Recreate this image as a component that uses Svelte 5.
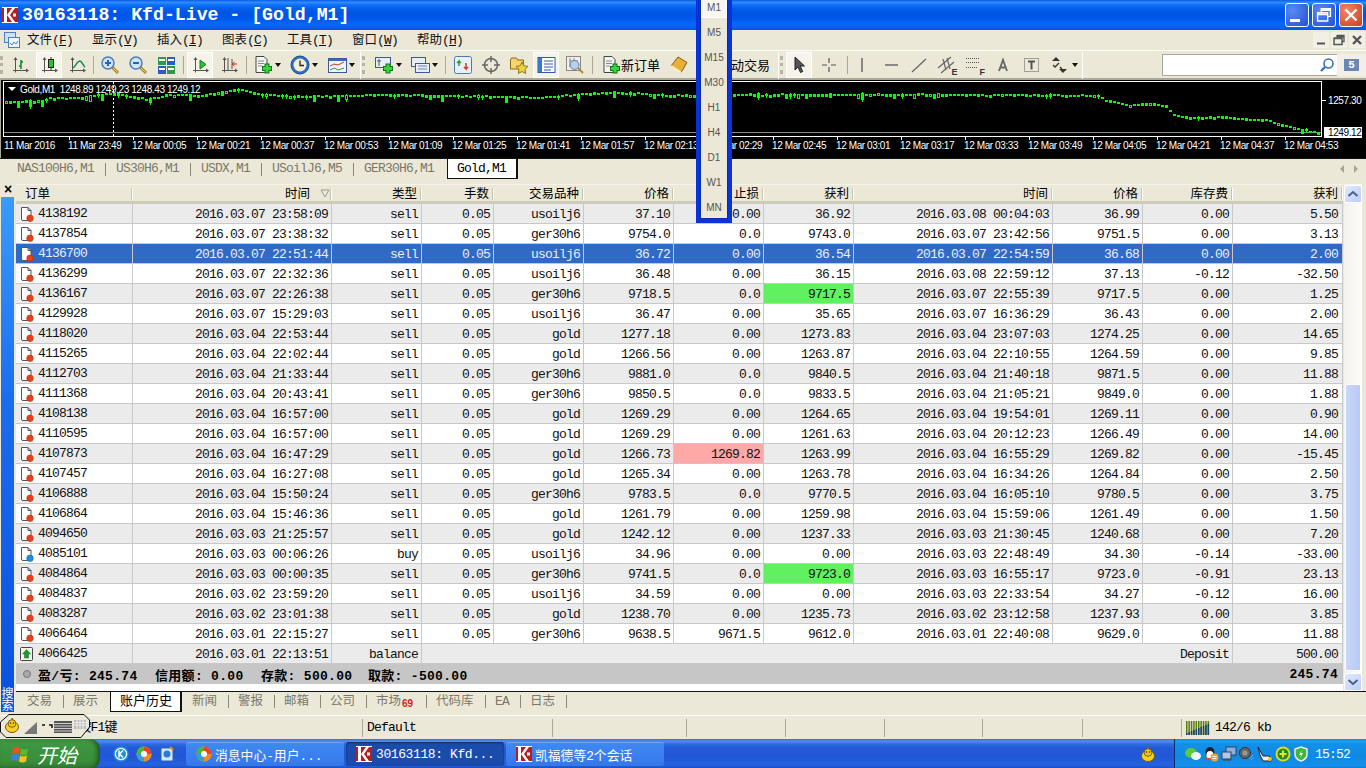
<script>
  const columns = [
    { label: "订单", left: true },
    { label: "时间", sort: true },
    { label: "类型" },
    { label: "手数" },
    { label: "交易品种" },
    { label: "价格" },
    { label: "止损" },
    { label: "获利" },
    { label: "时间" },
    { label: "价格" },
    { label: "库存费" },
    { label: "获利" }
  ];

  const raw = `4138192|2016.03.07 23:58:09|sell|0.05|usoilj6|37.10|0.00|36.92|2016.03.08 00:04:03|36.99|0.00|5.50
4137854|2016.03.07 23:38:32|sell|0.05|ger30h6|9754.0|0.0|9743.0|2016.03.07 23:42:56|9751.5|0.00|3.13
4136700|2016.03.07 22:51:44|sell|0.05|usoilj6|36.72|0.00|36.54|2016.03.07 22:54:59|36.68|0.00|2.00
4136299|2016.03.07 22:32:36|sell|0.05|usoilj6|36.48|0.00|36.15|2016.03.08 22:59:12|37.13|-0.12|-32.50
4136167|2016.03.07 22:26:38|sell|0.05|ger30h6|9718.5|0.0|9717.5|2016.03.07 22:55:39|9717.5|0.00|1.25
4129928|2016.03.07 15:29:03|sell|0.05|usoilj6|36.47|0.00|35.65|2016.03.07 16:36:29|36.43|0.00|2.00
4118020|2016.03.04 22:53:44|sell|0.05|gold|1277.18|0.00|1273.83|2016.03.04 23:07:03|1274.25|0.00|14.65
4115265|2016.03.04 22:02:44|sell|0.05|gold|1266.56|0.00|1263.87|2016.03.04 22:10:55|1264.59|0.00|9.85
4112703|2016.03.04 21:33:44|sell|0.05|ger30h6|9881.0|0.0|9840.5|2016.03.04 21:40:18|9871.5|0.00|11.88
4111368|2016.03.04 20:43:41|sell|0.05|ger30h6|9850.5|0.0|9833.5|2016.03.04 21:05:21|9849.0|0.00|1.88
4108138|2016.03.04 16:57:00|sell|0.05|gold|1269.29|0.00|1264.65|2016.03.04 19:54:01|1269.11|0.00|0.90
4110595|2016.03.04 16:57:00|sell|0.05|gold|1269.29|0.00|1261.63|2016.03.04 20:12:23|1266.49|0.00|14.00
4107873|2016.03.04 16:47:29|sell|0.05|gold|1266.73|1269.82|1263.99|2016.03.04 16:55:29|1269.82|0.00|-15.45
4107457|2016.03.04 16:27:08|sell|0.05|gold|1265.34|0.00|1263.78|2016.03.04 16:34:26|1264.84|0.00|2.50
4106888|2016.03.04 15:50:24|sell|0.05|ger30h6|9783.5|0.0|9770.5|2016.03.04 16:05:10|9780.5|0.00|3.75
4106864|2016.03.04 15:46:36|sell|0.05|gold|1261.79|0.00|1259.98|2016.03.04 15:59:06|1261.49|0.00|1.50
4094650|2016.03.03 21:25:57|sell|0.05|gold|1242.12|0.00|1237.33|2016.03.03 21:30:45|1240.68|0.00|7.20
4085101|2016.03.03 00:06:26|buy|0.05|usoilj6|34.96|0.00|0.00|2016.03.03 22:48:49|34.30|-0.14|-33.00
4084864|2016.03.03 00:00:35|sell|0.05|ger30h6|9741.5|0.0|9723.0|2016.03.03 16:55:17|9723.0|-0.91|23.13
4084837|2016.03.02 23:59:20|sell|0.05|usoilj6|34.59|0.00|0.00|2016.03.03 22:33:54|34.27|-0.12|16.00
4083287|2016.03.02 23:01:38|sell|0.05|gold|1238.70|0.00|1235.73|2016.03.02 23:12:58|1237.93|0.00|3.85
4066464|2016.03.01 22:15:27|sell|0.05|ger30h6|9638.5|9671.5|9612.0|2016.03.01 22:40:08|9629.0|0.00|11.88`;
  const rows = raw.split("\n").map((l) => l.split("|"));

  // which cells hit their stop / take profit
  const hits = { "4136167-7": "tp", "4084864-7": "tp", "4107873-6": "sl" };

  // chart: rough price path as [x, y] anchors, noise on top
  const anchors = [[5,101],[40,100],[50,97],[75,98],[90,95],[110,92],[147,99],[165,94],[200,95],[240,88],[255,93],[300,96],[400,94],[460,95],[540,97],[600,92],[620,92],[680,95],[740,94],[1000,94],[1097,95],[1105,100],[1130,105],[1150,103],[1165,105],[1172,114],[1190,117],[1220,116],[1240,118],[1260,119],[1270,120],[1280,124],[1300,129],[1318,132]];
  function pathY(x) {
    for (let i = 1; i < anchors.length; i++) {
      if (x <= anchors[i][0]) {
        const [x0, y0] = anchors[i - 1];
        const [x1, y1] = anchors[i];
        return y0 + ((x - x0) / (x1 - x0)) * (y1 - y0);
      }
    }
    return 132;
  }
  let seed = 17;
  function rnd() {
    seed = (seed * 1103515245 + 12345) & 0x7fffffff;
    return seed / 0x7fffffff;
  }
  const bars = [];
  for (let x = 5; x <= 1318; x += 4) {
    const r = rnd();
    const y = Math.round(pathY(x) + (rnd() - 0.5) * 1.2);
    const h = r < 0.6 ? 2 : r < 0.9 ? 3 : r < 0.97 ? 5 : 7;
    bars.push({ x, y, h, wick: rnd() < 0.12 ? 3 : 0, hollow: h > 2 && rnd() < 0.2 });
  }
  const timeLabels = ["11 Mar 2016","11 Mar 23:49","12 Mar 00:05","12 Mar 00:21","12 Mar 00:37","12 Mar 00:53","12 Mar 01:09","12 Mar 01:25","12 Mar 01:41","12 Mar 01:57","12 Mar 02:13","12 Mar 02:29","12 Mar 02:45","12 Mar 03:01","12 Mar 03:17","12 Mar 03:33","12 Mar 03:49","12 Mar 04:05","12 Mar 04:21","12 Mar 04:37","12 Mar 04:53"];

  const menus = [["文件","F"],["显示","V"],["插入","I"],["图表","C"],["工具","T"],["窗口","W"],["帮助","H"]];
  const periods = ["M1","M5","M15","M30","H1","H4","D1","W1","MN"];
  const chartTabs = ["NAS100H6,M1","US30H6,M1","USDX,M1","USoilJ6,M5","GER30H6,M1"];
  const bottomTabs = ["交易","展示"];
  const bottomTabs2 = ["新闻","警报","邮箱","公司","市场","代码库","EA","日志"];
  const statusCells = [363, 190, 134, 99, 99, 98, 100, 99];

  const axis = '<path d="M5.5 3v14.5M3 15.5h15" fill="none" stroke="#555"/><path d="M3.5 5l2-3 2 3zM16 13.5l3 2-3 2z" fill="#555"/>';
  const lens = (sign) => `<path d="M12 12l6 6" stroke="#a8842a" stroke-width="3"/><path d="M12.500 12.500l5 5" stroke="#f4cf5c" stroke-width="1"/><circle cx="8" cy="8" r="6" fill="#cfe4fa" stroke="#4a7fb5" stroke-width="1.500"/><path d="${sign}" stroke="#2a62b8" stroke-width="2"/>`;
  const plus = '<path d="M14 8.500v10M9 13.500h10" stroke="#0a7a1a" stroke-width="5"/><path d="M14 9.500v8M10 13.500h8" stroke="#3cd03c" stroke-width="3"/>';

  const icons = {
    bars: axis + '<path d="M11 5v9M9 11h2M11 7h2" fill="none" stroke="#0a8a1a" stroke-width="1.500"/>',
    candle: axis + '<path d="M12 2v13" stroke="#333"/><rect x="9.500" y="4.500" width="5" height="8" fill="#2fc22f" stroke="#222"/>',
    line: axis + '<path d="M6 13c3-2 4-7 7-7 2 0 3 5 5 6" fill="none" stroke="#1a8a5a" stroke-width="1.500"/>',
    zoomin: lens("M5 8h6M8 5v6"),
    zoomout: lens("M5 8h6"),
    grid: '<rect x="2" y="2" width="8" height="8" fill="#2c9a4a"/><rect x="11" y="2" width="8" height="8" fill="#2a5fb8"/><rect x="2" y="11" width="8" height="8" fill="#2a5fb8"/><rect x="11" y="11" width="8" height="8" fill="#2c9a4a"/><path d="M3 5h6M12 5h6M3 14h6M12 14h6" stroke="#fff" stroke-width="2"/>',
    shift: axis + '<path d="M10 5v9l6-4.500z" fill="#2fc22f" stroke="#128012"/>',
    end: axis + '<path d="M9 3v12M13 4v10" stroke="#555"/><path d="M13 9h5M15.500 7l-2.500 2 2.500 2" stroke="#d02a10" fill="none"/>',
    newdoc: '<path d="M3 1.500h8l3 3v13h-11z" fill="#f4f4f0" stroke="#444"/><path d="M5 6h6M5 8.500h6M5 11h4" stroke="#888"/>' + plus,
    clock: '<circle cx="10" cy="10" r="9" fill="#2c6fc4" stroke="#1a4a8a"/><circle cx="10" cy="10" r="6.500" fill="#f6efd6"/><path d="M10 5.500v5h4" stroke="#222" fill="none" stroke-width="1.300"/>',
    indic: '<rect x="1.500" y="3.500" width="18" height="14" fill="#f4f4f8" stroke="#3a5a9a"/><rect x="2" y="4" width="17" height="2" fill="#3a6ac0"/><path d="M3 11l4-2 4 1 6-3" stroke="#c03030" fill="none"/><path d="M3 15l4-2 4 2 6-2" stroke="#2a9a3a" fill="none"/>',
    add: '<rect x="1.500" y="2.500" width="15" height="10" fill="#e8eef8" stroke="#3a5a9a"/><path d="M5 4v7M3 6h4" stroke="#555"/>' + plus,
    tile: '<rect x="1.500" y="2.500" width="14" height="9" fill="#e8eef8" stroke="#3a5a9a"/><rect x="5.500" y="8.500" width="14" height="9" fill="#e8eef8" stroke="#3a5a9a"/><path d="M8 11h9M8 14h9" stroke="#6a84b0"/>',
    market: '<rect x="1.500" y="1.500" width="17" height="17" rx="2" fill="#e8f0fa" stroke="#4a7ab5"/><path d="M6 11V6l-2 2M6 6l2 2" stroke="#2aa02a" fill="none" stroke-width="1.500"/><path d="M13 8v6l-2-2M13 14l2-2" stroke="#d83a1a" fill="none" stroke-width="1.500"/>',
    cross: '<circle cx="10" cy="10" r="6.500" fill="none" stroke="#666" stroke-width="1.500"/><path d="M10 1v6M10 13v6M1 10h6M13 10h6" stroke="#666" stroke-width="1.500"/>',
    fav: '<path d="M1.500 5l1-2h5l1 2h6v9h-13z" fill="#f6d66a" stroke="#8a6a1a"/><path d="M13 7l1.800 3.800 4.200.6-3 2.900.7 4.200-3.700-2-3.700 2 .7-4.200-3-2.900 4.200-.6z" fill="#f2d23a" stroke="#8a7a1a"/>',
    nav: '<rect x="2" y="2.500" width="17" height="15" fill="#fff" stroke="#2a5fa8"/><rect x="2" y="3" width="4" height="14" fill="#3a78c8"/><path d="M8 6h9M8 9h9M8 12h9M8 15h7" stroke="#3a5a9a"/>',
    tester: '<rect x="1.500" y="1.500" width="14" height="14" fill="#f0f0f0" stroke="#888"/><path d="M5 3v9M9 3v9M4 6h9" stroke="#888"/><circle cx="9.500" cy="10" r="4.500" fill="#b8d0ee" stroke="#6a7f9a"/><path d="M13 13l5 5" stroke="#b08a2a" stroke-width="2"/>',
    book: '<path d="M2 11l7-9 9 5.500-6 10z" fill="#e8b03a" stroke="#8a5a10"/><path d="M2 11l10 6.500" stroke="#fff2c0" stroke-width="2"/>',
    cursor: '<path d="M6 2v13l3-3 2.500 5.500 2.200-1-2.500-5.500h4.300z" fill="#555" stroke="#222"/>',
    hair: '<path d="M10 3v5M10 12v5M3 10h5M12 10h5" stroke="#555" stroke-width="1.200"/>',
    vline: '<path d="M10 3v14" stroke="#555" stroke-width="1.300"/>',
    hline: '<path d="M4 10h13" stroke="#555" stroke-width="1.300"/>',
    trend: '<path d="M3 17L17 4" stroke="#666" stroke-width="1.300"/>',
    chan: '<path d="M1 13L14 2M4 18L17 7M6 4l3 11M10 3l3 11" stroke="#666" stroke-width="1.200"/>',
    fibo: '<path d="M2 3.500h14M2 7.500h14M2 12.500h12" stroke="#555" stroke-dasharray="1 1"/>',
    letter: '<path d="M6 16L10 5l4 11M7.500 12.500h5" stroke="#666" stroke-width="1.800" fill="none"/>',
    label: '<rect x="2.500" y="3.500" width="14" height="13" fill="none" stroke="#555" stroke-dasharray="1 1"/><path d="M6 6.500h7M9.500 6.500v8" stroke="#555" stroke-width="2"/>',
    arrows: '<path d="M6 2l4 4H2z" fill="#333"/><path d="M13 18l4-4H9z" fill="#333"/><path d="M3 10l2 2 4-4M10 12l2 2" stroke="#333" fill="none" stroke-width="1.300"/>'
  };

  const tools = [
    { grip: 6 },
    { w: 28, i: "bars" }, { w: 30, i: "candle", on: true }, { w: 26, i: "line" },
    { sep: 6 },
    { w: 28, i: "zoomin" }, { w: 28, i: "zoomout" }, { w: 28, i: "grid" },
    { sep: 6 },
    { w: 28, i: "shift", on: true }, { w: 30, i: "end" },
    { sep: 3 },
    { w: 37, i: "newdoc", dd: true }, { w: 36, i: "clock", dd: true }, { w: 38, i: "indic", dd: true },
    { sep: 4, thick: true }, { grip: 6 },
    { w: 36, i: "add", dd: true }, { w: 37, i: "tile", dd: true },
    { sep: 8 },
    { w: 27, i: "market" }, { w: 29, i: "cross" }, { w: 27, i: "fav" }, { w: 27, i: "nav", on: true }, { w: 31, i: "tester" },
    { sep: 3 },
    { w: 71, i: "newdoc", text: "新订单" }, { w: 30, i: "book" },
    { w: 82, label: "动交易" },
    { sep: 4, thick: true }, { grip: 6 },
    { w: 26, i: "cursor", on: true }, { w: 33, i: "hair" },
    { sep: 3 },
    { w: 28, i: "vline" }, { w: 29, i: "hline" }, { w: 28, i: "trend" }, { w: 27, i: "chan", tag: "E" }, { w: 28, i: "fibo", tag: "F" },
    { w: 30, i: "letter" }, { w: 27, i: "label" }, { w: 35, i: "arrows", dd: true },
    { sep: 4, thick: true }
  ];

  const wheel = '<circle cx="8" cy="8" r="7.500" fill="#f5b800"/><path d="M8 8L8 .5A7.500 7.500 0 0 1 15.500 8z" fill="#e8432a"/><path d="M8 8l7.500 0A7.500 7.500 0 0 1 8 15.500z" fill="#f08a20"/><path d="M8 8v7.500A7.500 7.500 0 0 1 .5 8z" fill="#2f9ee8"/><path d="M8 8H.5A7.500 7.500 0 0 1 8 .5z" fill="#45b838"/><circle cx="8" cy="8" r="3" fill="#fff"/>';
  const duck = '<path d="M8 1l1 3" stroke="#a05a10" stroke-width="1.500"/><ellipse cx="8" cy="10" rx="6.500" ry="5.500" fill="#f6d21e" stroke="#7a5a10"/><circle cx="8" cy="6.500" r="3.800" fill="#f6d21e" stroke="#7a5a10"/><circle cx="6.500" cy="6" r=".8" fill="#222"/><circle cx="9.500" cy="6" r=".8" fill="#222"/><path d="M7 7.500h2l-1 1.200z" fill="#e8801a"/>';
  const kmark = '<rect width="16" height="16" fill="#fff"/><rect y="1" width="16" height="14" fill="#b81c1c"/><rect x="2" y="1" width="3" height="14" fill="#fff"/><path d="M5 8l5-7h3L8 8l5 7h-3z" fill="#fff"/><rect x="11" y="6.500" width="3" height="3" fill="#fff"/>';
</script>

{#snippet orderIcon(kind)}
  <svg class="oicon" viewBox="0 0 16 16" width="16" height="16">
    {#if kind === "balance"}
      <rect x="1.500" y="1.500" width="12" height="13" rx="1" fill="#f4f4ec" stroke="#444" />
      <path d="M7.500 3.500l4 4.500H9.500v4h-4V8H3.500z" fill="#1f9a2f" stroke="#0a6a1a" stroke-width=".5" />
    {:else}
      <path d="M2.500 1.500h6.500l3 3v10h-8a1.500 1.500 0 0 1-1.500-1.500z" fill="#fff" stroke="#555" />
      <path d="M9 1.500v3h3" fill="none" stroke="#555" />
      <circle cx="11" cy="12.300" r="3.300" fill={kind === "buy" ? "#1a8ee0" : "#e8401a"} stroke={kind === "buy" ? "#0a5aa0" : "#a02a0a"} stroke-width=".5" />
    {/if}
  </svg>
{/snippet}

<div class="window">
  <header class="titlebar">
    <svg class="applogo" viewBox="0 0 16 16" width="16" height="16">{@html kmark}</svg>
    <span class="title">30163118: Kfd-Live - [Gold,M1]</span>
    <div class="winbtns">
      <div class="wb"><span class="wmin"></span></div>
      <div class="wb">
        <svg viewBox="0 0 24 24" width="24" height="24"><path d="M9 5.500h10v8h-3M9 5.500v3M9 5h10v2H9z" fill="none" stroke="#fff" stroke-width="1.500" /><path d="M5 9.500h11v9H5zM5 9.500h11v2H5z" fill="none" stroke="#fff" stroke-width="1.500" /></svg>
      </div>
      <div class="wb close">
        <svg viewBox="0 0 24 24" width="24" height="24"><path d="M6 6l12 12M18 6L6 18" stroke="#fff" stroke-width="2.600" /></svg>
      </div>
    </div>
  </header>

  <nav class="menubar">
    <svg class="mdiicon" viewBox="0 0 18 18" width="18" height="18"><rect x="1.500" y="1.500" width="11" height="10" fill="#cfe0f4" stroke="#4a80c0" /><rect x="5.500" y="6.500" width="11" height="10" fill="#eef4fc" stroke="#4a80c0" /><path d="M7 12l2 2 2-3 2 2 2-3" stroke="#4a80c0" fill="none" /></svg>
    {#each menus as [name, key]}
      <span class="menu">{name}<span class="key">(<u>{key}</u>)</span></span>
    {/each}
    <div class="mdibtns">
      <div class="mb"><svg viewBox="0 0 16 16" width="16" height="16"><path d="M4 11.500h8" stroke="#555" stroke-width="2" /></svg></div>
      <div class="mb"><svg viewBox="0 0 16 16" width="16" height="16"><path d="M6 3.500h7v6h-2M6 3v2h7" fill="none" stroke="#555" stroke-width="1.300" /><path d="M3 6.500h8v6H3zM3 6h8" fill="none" stroke="#555" stroke-width="1.500" /></svg></div>
      <div class="mb"><svg viewBox="0 0 16 16" width="16" height="16"><path d="M4 4l8 8M12 4l-8 8" stroke="#555" stroke-width="2.400" /></svg></div>
    </div>
  </nav>

  <div class="toolbar">
    {#each tools as t}
      {#if t.grip}
        <span class="grip" style="width:{t.grip}px"></span>
      {:else if t.sep}
        <span class="sep" class:thick={t.thick} style="width:{t.sep}px"></span>
      {:else if t.label}
        <span class="tool labelonly" style="width:{t.w}px">{t.label}</span>
      {:else}
        <span class="tool" class:wide={t.text} style="width:{t.w}px">
          <span class="box" class:on={t.on}>
            <svg viewBox="0 0 20 20" width="20" height="20">{@html icons[t.i]}</svg>
            {#if t.tag}<b class="tag">{t.tag}</b>{/if}
          </span>
          {#if t.text}<span class="tooltext">{t.text}</span>{/if}
          {#if t.dd}<i class="caret"></i>{/if}
        </span>
      {/if}
    {/each}
    <div class="search">
      <svg viewBox="0 0 16 16" width="16" height="16"><circle cx="9.500" cy="6.500" r="4.500" fill="#fff" stroke="#3a70c0" stroke-width="1.600" /><path d="M6 10l-4 4" stroke="#3a70c0" stroke-width="2.400" /></svg>
    </div>
    <div class="chat">
      <span class="bubble">5</span>
    </div>
  </div>

  <div class="chart">
    <svg viewBox="0 80 1366 78" width="1366" height="78">
      <rect x="3.500" y="81.500" width="1318" height="55" fill="none" stroke="#fff" />
      <path d="M113.500 82v54" stroke="#fff" stroke-dasharray="2 2" />
      <path d="M4 132.500h1317" stroke="#8a8a8a" />
      {#each bars as b}
        {#if b.wick}
          <rect x={b.x + 1} y={b.y - 1} width="1" height={b.h + b.wick} fill="#00ff00" />
        {/if}
        <rect x={b.x} y={b.y} width="3" height={b.h} fill="#00ff00" />
        {#if b.hollow}
          <rect x={b.x + 1} y={b.y + 1} width="1" height={b.h - 2} fill="#000" />
        {/if}
      {/each}
      <path d="M8 87h8l-4 4z" fill="#fff" />
      <text x="20" y="93" class="ct">Gold,M1&#160;&#160;1248.89 1249.23 1248.43 1249.12</text>
      {#each timeLabels as label, i}
        {@const x = i === 0 ? 4 : 4 + 64 * i}
        <text x={x} y="149" class="ct">{label}</text>
        {#if i > 0}<path d="M{x + 1}.5 137v3" stroke="#fff" />{/if}
      {/each}
      <path d="M1322 100.500h4" stroke="#fff" />
      <text x="1328" y="104" class="ct">1257.30</text>
      <rect x="1324" y="127" width="38" height="11" fill="#fff" />
      <text x="1328" y="136" class="ct dark">1249.12</text>
    </svg>
  </div>

  <div class="charttabs">
    <div class="chartnames">
      {#each chartTabs as name}
        <span class="ctab">{name}</span>
      {/each}
    </div>
    <span class="ctab active">Gold,M1</span>
    <div class="tabarrows">
      <i class="al"></i><i class="ar"></i>
    </div>
  </div>

  <div class="terminal">
    <aside class="side">
      <span class="x">×</span>
      <div class="strip"><span>搜索</span></div>
    </aside>

    <div class="pane">
      <div class="panemain">
        <div class="tablearea">
          <div class="thead grid">
            {#each columns as c}
              <div class="th" class:left={c.left}>
                <span>{c.label}</span>
                {#if c.sort}<svg class="sort" viewBox="0 0 10 10" width="10" height="10"><path d="M1 2h8L5 9z" fill="none" stroke="#999" /></svg>{/if}
              </div>
            {/each}
          </div>

          {#each rows as row, i}
            <div class="tr grid" class:alt={i % 2 === 0} class:sel={i === 2}>
              {#each row as cell, j}
                {@const hit = hits[row[0] + "-" + j]}
                <div class="td" class:first={j === 0} class:tp={hit === "tp"} class:sl={hit === "sl"}>
                  {#if j === 0}{@render orderIcon(row[2])}{/if}{cell}
                </div>
              {/each}
            </div>
          {/each}

          <div class="tr grid alt balance">
            <div class="td first">{@render orderIcon("balance")}4066425</div>
            <div class="td">2016.03.01 22:13:51</div>
            <div class="td">balance</div>
            <div class="td span8">Deposit</div>
            <div class="td">500.00</div>
          </div>

          <div class="summary">
            <svg viewBox="0 0 10 10" width="10" height="10"><circle cx="5" cy="5" r="3.500" fill="#aaa" stroke="#777" /></svg>
            <span class="sum a">盈/亏: 245.74</span>
            <span class="sum b">信用额: 0.00</span>
            <span class="sum c">存款: 500.00</span>
            <span class="sum d">取款: -500.00</span>
            <span class="sum total">245.74</span>
          </div>
          <div class="whitegap"></div>
        </div>

        <div class="scrollbar">
          <div class="sb up"><svg viewBox="0 0 16 16" width="16" height="16"><path d="M3.500 10l4.500-4 4.500 4" fill="none" stroke="#4d6185" stroke-width="2" /></svg></div>
          <div class="track"></div>
          <div class="thumb"></div>
          <div class="sb"><svg viewBox="0 0 16 16" width="16" height="16"><path d="M3.500 6l4.500 4 4.500-4" fill="none" stroke="#4d6185" stroke-width="2" /></svg></div>
        </div>
      </div>

      <div class="bottomtabs">
        {#each bottomTabs as name}<span class="btab">{name}</span>{/each}
        <span class="btab active">账户历史</span>
        {#each bottomTabs2 as name}
          <span class="btab">{name}{#if name === "市场"}<b class="badge">69</b>{/if}</span>
        {/each}
      </div>
    </div>
  </div>

  <footer class="statusbar">
    {#each statusCells as w, i}
      <div class="scell" style="width:{w}px">
        {#if i === 0}<span class="help">请按F1键</span>{/if}
        {#if i === 1}Default{/if}
      </div>
    {/each}
    <div class="scell net">
      <svg viewBox="0 0 24 14" width="24" height="14">
        {#each Array(10) as _, n}
          <rect x={n * 2.400} y={0} width="1.500" height={14} fill="#5a7a10" />
          <rect x={n * 2.400} y={12 - n} width="1.500" height={2 + n} fill="#14486a" />
        {/each}
      </svg>
      <span>142/6 kb</span>
    </div>
  </footer>

  <div class="taskbar">
    <div class="start">
      <svg viewBox="0 0 20 18" width="20" height="18"><path d="M2 3c3-1.500 5-1 7 0l-1 6c-2-1-4-1.500-7 0z" fill="#e8541c" /><path d="M10 3.500c2 1 4 1.500 7 0l-1 6c-3 1.500-5 1-7 0z" fill="#5cb82a" /><path d="M1 10c3-1.500 5-1 7 0l-1 6c-2-1-4-1.500-7 0z" fill="#3a82e0" /><path d="M9 10.500c2 1 4 1.500 7 0l-1 6c-3 1.500-5 1-7 0z" fill="#f6c41a" /></svg>
      <span>开始</span>
    </div>
    <div class="quick">
      <svg viewBox="0 0 16 16" width="16" height="16"><circle cx="8" cy="8" r="7" fill="#fff" stroke="#1f8fe0" stroke-width="1.500" /><circle cx="8" cy="8" r="5" fill="#1f8fe0" /><path d="M6 4.500v7M10 4.500L6.500 8l3.500 3.500" stroke="#fff" fill="none" stroke-width="1.500" /></svg>
      <svg viewBox="0 0 16 16" width="16" height="16">{@html wheel}</svg>
      <svg viewBox="0 0 16 16" width="16" height="16"><rect x="2" y="2" width="12" height="13" rx="1" fill="#d6e8fa" stroke="#2a62b8" /><circle cx="8" cy="8" r="3.500" fill="#2a7ad8" /><path d="M11 1l3 3" stroke="#f08a20" stroke-width="2" /></svg>
    </div>
    <div class="taskbtn"><svg viewBox="0 0 16 16" width="16" height="16">{@html wheel}</svg><span>消息中心-用户...</span></div>
    <div class="taskbtn pressed"><svg viewBox="0 0 16 16" width="16" height="16">{@html kmark}</svg><span class="m">30163118: Kfd...</span></div>
    <div class="taskbtn"><svg viewBox="0 0 16 16" width="16" height="16">{@html kmark}</svg><span>凯福德等2个会话</span></div>
    <div class="taskspace">
      <svg viewBox="0 0 16 16" width="16" height="16">{@html duck}</svg>
    </div>
    <div class="tray">
      <svg viewBox="0 0 16 16" width="16" height="16"><ellipse cx="6" cy="7" rx="6" ry="5" fill="#5cc83a" /><ellipse cx="11" cy="10" rx="5" ry="4" fill="#f2f6f2" /></svg>
      <svg viewBox="0 0 16 16" width="16" height="16"><ellipse cx="7" cy="6" rx="4.500" ry="5" fill="#222" /><ellipse cx="7" cy="9" rx="3.500" ry="4" fill="#fff" /><path d="M2 12h9v2H2z" fill="#e8401a" /><circle cx="11.500" cy="11.500" r="4" fill="#f0a030" /><path d="M9.500 10.500h4M9.500 12.500h4" stroke="#fff" /></svg>
      <svg viewBox="0 0 16 16" width="16" height="16"><rect x="5" y="1" width="10" height="8" fill="#8ab0e0" stroke="#345" /><rect x="1" y="6" width="9" height="7" fill="#b0c8e8" stroke="#345" /><path d="M2 14h8" stroke="#345" /></svg>
      <svg viewBox="0 0 16 16" width="16" height="16"><circle cx="6" cy="7" r="5.500" fill="#666" stroke="#333" /><circle cx="6" cy="7" r="2.500" fill="#999" /><path d="M10 13l4-4M12 14l3-3" stroke="#7a9ae0" /></svg>
      <svg viewBox="0 0 16 16" width="16" height="16"><path d="M1 1l5 9h6l3 3-1 2H6L3 9z" fill="#eee" stroke="#222" /><circle cx="13" cy="13" r="2" fill="#e8c81a" /></svg>
      <svg viewBox="0 0 16 16" width="16" height="16"><circle cx="8" cy="8" r="7.500" fill="#e8d81a" /><circle cx="8" cy="8" r="5.500" fill="#1c8a2a" /><path d="M8 4.500v7M4.500 8h7" stroke="#e8e81a" stroke-width="2" /></svg>
      <svg viewBox="0 0 16 16" width="16" height="16"><path d="M8 1l6 2v5c0 4-3 6-6 7-3-1-6-3-6-7V3z" fill="#3cb83a" stroke="#eee" stroke-width="1.500" /><path d="M9 4L6 9h2l-1 3 3-5H8z" fill="#fff" /></svg>
      <span class="clock">15:52</span>
    </div>
  </div>

  <!-- timeframe bar dragged over the window -->
  <div class="periods">
    {#each periods as p, i}
      <span class="period" class:cur={i === 0}>{p}</span>
    {/each}
  </div>

  <!-- QQ input bar floating over the status line -->
  <div class="qqbar">
    <svg viewBox="0 0 90 24" width="90" height="24">
      <path d="M9 .5H84L89.500 6v7L81 23.500H6L.5 18V8z" fill="#ece9d8" stroke="#111" />
      <g transform="translate(4 3)">{@html duck}</g>
      <path d="M24 20L37 8v12z" fill="#777" />
      <path d="M42 11h3M49 11h3v3" stroke="#111" stroke-width="1.500" fill="none" />
      <rect x="54" y="7" width="18" height="12" fill="#555" />
      <path d="M54 9.500h18M54 12h18M54 14.500h18M54 17h18" stroke="#ccc" />
      <rect x="74" y="6" width="12" height="9" fill="#bbb" />
      <path d="M74 8.500h12M74 11h12M77 6v9M80 6v9M83 6v9" stroke="#eee" />
    </svg>
  </div>
</div>

<style>
  :global(body) {
    margin: 0;
    background: #ece9d8;
    overflow: hidden;
  }
  .window {
    position: relative;
    width: 1366px;
    height: 768px;
    overflow: hidden;
    font-family: "Liberation Mono", "Noto Sans CJK SC", monospace;
    font-size: 13px;
    letter-spacing: -.8px;
    color: #000;
  }

  .titlebar {
    height: 30px;
    display: flex;
    align-items: center;
    letter-spacing: 0;
    background: linear-gradient(#0a5ae8 0, #2f8dfb 8%, #0f72fb 16%, #0460ec 28%, #0054e3 45%, #0058ee 65%, #0868fa 80%, #0760f0 92%, #0556e0 100%);
  }
  .applogo { margin-left: 2px; }
  .title {
    margin-left: 4px;
    color: #fff;
    font-size: 18.2px;
    font-weight: bold;
    white-space: pre;
  }
  .winbtns {
    margin-left: auto;
    display: flex;
    gap: 3px;
    margin-right: 3px;
  }
  .wb {
    position: relative;
    width: 22px;
    height: 22px;
    border: 1px solid #fff;
    border-radius: 3px;
    background: radial-gradient(circle at 30% 30%, #5a8af0, #1f50d8);
    display: flex;
    align-items: center;
    justify-content: center;
    box-sizing: content-box;
  }
  .wb.close { background: radial-gradient(circle at 30% 30%, #f0876a, #c8401c); }
  .wmin {
    position: absolute;
    left: 4px;
    bottom: 4px;
    width: 10px;
    height: 3px;
    background: #fff;
  }

  .menubar {
    height: 20px;
    display: flex;
    align-items: center;
    background: #ebe8d8;
    letter-spacing: 0;
    font-family: "Noto Sans CJK SC", sans-serif;
  }
  .mdiicon { margin: 0 6px 0 3px; }
  .menu {
    width: 65px;
    font-size: 12.5px;
    white-space: nowrap;
    color: #111;
    padding-bottom: 3px;
  }
  .key {
    font-family: "Liberation Mono", monospace;
    font-size: 13px;
    letter-spacing: -.8px;
  }
  .mdibtns {
    margin-left: auto;
    display: flex;
    gap: 2px;
    margin-right: 1px;
  }
  .mb {
    width: 16px;
    height: 16px;
    background: #f2f0e4;
    display: flex;
  }

  .toolbar {
    height: 30px;
    box-sizing: border-box;
    border-top: 1px solid #fff;
    border-bottom: 2px solid #aca899;
    background: #ebe8d8;
    display: flex;
    align-items: center;
    letter-spacing: 0;
  }
  .grip {
    align-self: center;
    height: 18px;
    box-sizing: border-box;
    border-left: 3px dotted #b8b4a2;
    margin-left: 0;
  }
  .sep {
    height: 20px;
    position: relative;
    display: block;
  }
  .sep::after {
    content: "";
    position: absolute;
    left: 50%;
    top: 1px;
    bottom: 1px;
    width: 1px;
    background: #aca899;
  }
  .sep.thick::after {
    top: -3px;
    bottom: -4px;
    background: #fff;
  }
  .tool {
    height: 26px;
    display: flex;
    align-items: center;
    justify-content: center;
    position: relative;
  }
  .tool.wide { justify-content: flex-start; padding-left: 5px; box-sizing: border-box; }
  .box {
    position: relative;
    display: flex;
    width: 20px;
    height: 20px;
    padding: 2px;
    border: 1px solid transparent;
  }
  .box.on {
    background: #f5f3ea;
    border-color: #fff;
  }
  .tag {
    position: absolute;
    right: 1px;
    bottom: 0;
    font-family: "Liberation Sans", sans-serif;
    font-size: 9px;
    line-height: 9px;
    color: #333;
  }
  .tooltext {
    font-family: "Noto Sans CJK SC", sans-serif;
    font-size: 13px;
    margin-left: -3px;
  }
  .labelonly {
    justify-content: flex-end;
    padding-right: 6px;
    box-sizing: border-box;
    font-family: "Noto Sans CJK SC", sans-serif;
    font-size: 13px;
  }
  .caret {
    width: 0;
    height: 0;
    margin-left: -1px;
    border: 3px solid transparent;
    border-top: 4px solid #111;
    border-bottom: 0;
  }
  .search {
    margin-left: auto;
    width: 175px;
    height: 22px;
    box-sizing: border-box;
    background: #fff;
    border: 1px solid #aca899;
    border-width: 1px 0 1px 1px;
    display: flex;
    align-items: center;
    justify-content: flex-end;
    padding-right: 2px;
  }
  .chat {
    width: 29px;
    height: 22px;
    background: #f2f0e6;
    display: flex;
    align-items: center;
    justify-content: center;
  }
  .bubble {
    width: 15px;
    height: 12px;
    background: #6d87b5;
    color: #fff;
    font-size: 11px;
    font-weight: bold;
    line-height: 12px;
    text-align: center;
  }

  .chart {
    height: 78px;
    background: #000;
    border-left: 1px solid #aca899;
    margin-left: 0;
    overflow: hidden;
    box-sizing: border-box;
  }
  .chart svg { display: block; margin-left: -1px; }
  .ct {
    font-family: "Liberation Sans", sans-serif;
    font-size: 10px;
    letter-spacing: -.4px;
    fill: #fff;
  }
  .ct.dark { fill: #000; }

  .charttabs {
    height: 21px;
    box-sizing: border-box;
    border-top: 1px solid #111;
    background: #ebe8d8;
    display: flex;
    align-items: stretch;
  }
  .chartnames {
    width: 447px;
    display: flex;
    box-sizing: border-box;
    padding-left: 17px;
    align-items: center;
  }
  .ctab {
    color: #7b7868;
    white-space: nowrap;
    line-height: 18px;
    padding-right: 11px;
    margin-right: 10px;
    border-right: 1px solid #8a8778;
    height: 13px;
    display: flex;
    align-items: center;
  }
  .ctab:nth-child(5) { border-right: 0; }
  .ctab.active {
    width: 71px;
    height: auto;
    box-sizing: border-box;
    margin: 0;
    padding: 0 0 0 9px;
    color: #000;
    background: #fff;
    border: 1px solid #111;
    border-top: 0;
    border-width: 0 2px 1px 1px;
  }
  .tabarrows {
    margin-left: auto;
    display: flex;
    gap: 10px;
    align-items: center;
    margin-right: 8px;
  }
  .al, .ar {
    width: 0;
    height: 0;
    border: 4px solid transparent;
  }
  .al { border-right: 4px solid #a8a595; border-left: 0; }
  .ar { border-left: 4px solid #a8a595; border-right: 0; }

  .terminal {
    height: 533px;
    display: flex;
    background: #ebe8d8;
  }
  .side {
    width: 16px;
    flex: none;
    display: flex;
    flex-direction: column;
    align-items: center;
  }
  .x {
    height: 18px;
    font-family: "Liberation Sans", sans-serif;
    font-size: 14px;
    font-weight: bold;
    line-height: 20px;
    letter-spacing: 0;
  }
  .strip {
    flex: 1;
    width: 13px;
    margin-left: -1px;
    background: linear-gradient(#3a9bfb 0, #1a6cf0 40%, #0a50e0 100%);
    color: #fff;
    font-family: "Noto Sans CJK SC", sans-serif;
    font-size: 12px;
    letter-spacing: 0;
    display: flex;
    flex-direction: column;
    justify-content: flex-end;
    align-items: center;
    padding-bottom: 1px;
  }
  .strip span {
    writing-mode: vertical-rl;
    text-orientation: upright;
    line-height: 13px;
  }
  .pane {
    flex: 1;
    display: flex;
    flex-direction: column;
    min-width: 0;
  }
  .panemain {
    display: flex;
    padding-top: 5px;
  }
  .tablearea {
    width: 1327px;
    flex: none;
  }
  .grid {
    display: grid;
    grid-template-columns: 117px 199px 90px 72px 90px 90px 90px 90px 199px 90px 90px 110px;
  }
  .thead {
    height: 20px;
    box-sizing: border-box;
    border-top: 1px solid #f6f4ec;
    border-bottom: 3px solid #cfcbba;
    font-family: "Noto Sans CJK SC", sans-serif;
    font-size: 12.5px;
    letter-spacing: 0;
  }
  .th {
    position: relative;
    display: flex;
    justify-content: flex-end;
    align-items: center;
    padding-right: 5px;
    line-height: 16px;
  }
  .th::after {
    content: "";
    position: absolute;
    right: 0;
    top: 3px;
    height: 12px;
    width: 1px;
    background: #fff;
    box-shadow: -1px 0 0 #c8c4b2;
  }
  .th.left {
    justify-content: flex-start;
    padding-left: 9px;
  }
  .th .sort {
    position: absolute;
    right: 2px;
    top: 3px;
  }
  .th:nth-child(2) { padding-right: 22px; }
  .tr {
    height: 20px;
    box-sizing: border-box;
    background: #fff;
    border-bottom: 1px solid #c8c8c8;
    color: #111;
  }
  .tr.alt { background: #ebebeb; }
  .tr.sel {
    background: #316ac5;
    color: #eaf0fb;
  }
  .td {
    border-right: 1px solid #c8c8c8;
    text-align: right;
    padding-right: 3px;
    line-height: 21px;
    height: 19px;
    white-space: nowrap;
    overflow: hidden;
  }
  .td:last-child { padding-right: 4px; }
  .td.first {
    text-align: left;
    display: flex;
    align-items: center;
    padding-left: 3px;
    line-height: 21px;
  }
  .oicon { margin-right: 3px; flex: none; }
  .td.tp { background: #60f060; }
  .td.sl { background: #ffa8a8; }
  .span8 { grid-column: span 8; }
  .summary {
    height: 20px;
    background: #c6c6c6;
    display: flex;
    align-items: center;
    font-weight: bold;
    font-size: 13px;
    letter-spacing: .3px;
    white-space: pre;
    padding-left: 6px;
    box-sizing: border-box;
    font-family: "Liberation Mono", "Noto Sans CJK SC", monospace;
  }
  .sum { display: block; }
  .sum.a { width: 117px; margin-left: 6px; }
  .sum.b { width: 106px; }
  .sum.c { width: 107px; }
  .sum.d { width: 110px; }
  .sum.total { margin-left: auto; padding-right: 5px; }
  .whitegap {
    height: 7px;
    background: #fff;
  }
  .scrollbar {
    width: 18px;
    height: 507px;
    margin-left: 1px;
    display: flex;
    flex-direction: column;
    position: relative;
    background: linear-gradient(90deg, #f3f1ec, #fdfdfa);
    padding-top: 1px;
    box-sizing: border-box;
  }
  .sb {
    height: 18px;
    flex: none;
    box-sizing: border-box;
    border: 1px solid #fff;
    border-radius: 2px;
    background: linear-gradient(135deg, #e1eafe, #bccdf7);
    display: flex;
    align-items: center;
    justify-content: center;
  }
  .track { flex: 1; }
  .thumb {
    position: absolute;
    left: 1px;
    right: 1px;
    top: 200px;
    height: 287px;
    box-sizing: border-box;
    border: 1px solid #fff;
    border-radius: 2px;
    background: linear-gradient(90deg, #c8d6fa, #b8caf6);
  }
  .bottomtabs {
    height: 21px;
    box-sizing: border-box;
    border-top: 1px solid #111;
    display: flex;
    align-items: stretch;
    padding-left: 11px;
    font-family: "Noto Sans CJK SC", sans-serif;
    font-size: 12.5px;
    letter-spacing: 0;
    color: #7b7868;
    margin-top: 0;
  }
  .btab {
    position: relative;
    width: 46px;
    box-sizing: border-box;
    display: flex;
    align-items: center;
    line-height: 16px;
    padding-bottom: 4px;
  }
  .btab::after {
    content: "";
    position: absolute;
    right: 9px;
    top: 3px;
    height: 13px;
    width: 1px;
    background: #8a8778;
  }
  .btab.active {
    width: 72px;
    margin: 0 10px 0 -9px;
    padding-left: 9px;
    background: #fff;
    color: #000;
    border: 1px solid #111;
    border-top: 0;
    border-width: 0 2px 1px 1px;
    font-size: 13px;
  }
  .btab.active::after { display: none; }
  .btab:nth-child(2)::after { display: none; }
  .btab:nth-child(8) { width: 60px; }
  .btab:nth-child(9) { width: 59px; }
  .btab:nth-child(10) {
    width: 35px;
    font-family: "Liberation Mono", monospace;
    font-size: 13px;
    letter-spacing: -.8px;
    padding-bottom: 1px;
  }
  .btab:nth-child(11) { width: 46px; }
  .badge {
    font-family: "Liberation Sans", sans-serif;
    font-size: 10px;
    color: #e01818;
    margin: 8px 0 0 1px;
    line-height: 10px;
  }

  .statusbar {
    height: 24px;
    margin-top: 3px;
    box-sizing: border-box;
    border-top: 1px solid #fff;
    display: flex;
    background: #ebe8d8;
    box-shadow: 0 -3px 0 #ebe8d8;
  }
  .scell {
    flex: none;
    height: 18px;
    margin-top: 3px;
    box-sizing: border-box;
    border-right: 1px solid #aca899;
    padding-left: 4px;
    line-height: 18px;
    white-space: nowrap;
    font-family: "Liberation Mono", "Noto Sans CJK SC", monospace;
  }
  .help { display: block; padding-left: 62px; }
  .net {
    flex: 1;
    border: 0;
    display: flex;
    align-items: center;
    gap: 5px;
  }

  .taskbar {
    height: 30px;
    display: flex;
    color: #fff;
    background: linear-gradient(#3168d5 0, #4a90ea 6%, #3a80e6 12%, #2a6cde 18%, #2359d6 30%, #2157d6 60%, #2562df 86%, #2158d4 92%, #1a46b0 100%);
    font-family: "Liberation Mono", "Noto Sans CJK SC", sans-serif;
    font-size: 12.8px;
    letter-spacing: 0;
  }
  .start {
    width: 100px;
    flex: none;
    box-sizing: border-box;
    display: flex;
    align-items: center;
    padding-left: 11px;
    gap: 6px;
    border-radius: 0 10px 10px 0;
    background: linear-gradient(#5aa55a 0, #3f9a42 10%, #3c9440 30%, #3a8f3c 70%, #317a34 100%);
    box-shadow: inset -3px 0 4px #1f5a22;
    font-style: italic;
    font-size: 20px;
  }
  .quick {
    width: 86px;
    flex: none;
    display: flex;
    gap: 7px;
    align-items: center;
    padding-left: 13px;
    box-sizing: border-box;
  }
  .taskbtn {
    width: 158px;
    height: 24px;
    margin: 3px 2px 0 0;
    flex: none;
    box-sizing: border-box;
    padding-left: 10px;
    display: flex;
    align-items: center;
    gap: 3px;
    border-radius: 3px;
    white-space: nowrap;
    background: linear-gradient(#3f8af0, #3a7ef0 60%, #3478e8);
    box-shadow: inset 0 1px 0 #6aa6f6;
  }
  .taskbtn.pressed {
    background: #1b4cab;
    box-shadow: inset 0 1px 2px #112e70;
  }
  .taskbtn .m {
    font-family: "Liberation Mono", monospace;
    font-size: 13px;
    letter-spacing: -.4px;
    margin-left: 1px;
  }
  .taskspace {
    flex: 1;
    display: flex;
    align-items: center;
    justify-content: flex-end;
    padding-right: 18px;
  }
  .tray {
    width: 192px;
    flex: none;
    box-sizing: border-box;
    border-left: 1px solid #10306e;
    display: flex;
    align-items: center;
    gap: 2px;
    padding-left: 10px;
    background: linear-gradient(#0f8bed 0, #18a0f0 8%, #1290e8 16%, #0f88e2 60%, #1590ea 90%, #0f70cc 100%);
  }
  .clock {
    margin-left: 4px;
    font-family: "Liberation Mono", monospace;
    font-size: 13px;
    letter-spacing: -.8px;
  }

  .periods {
    position: absolute;
    left: 696px;
    top: -7px;
    width: 36px;
    box-sizing: border-box;
    border: 4px solid #0a34d8;
    outline: 0;
    box-shadow: inset 0 0 0 1px #0a2aa8;
    background: #ebe8d8;
    padding: 0 1px 1px;
    display: flex;
    flex-direction: column;
    gap: 4px;
    font-family: "Liberation Sans", sans-serif;
    font-size: 10px;
    letter-spacing: 0;
    color: #555;
  }
  .period {
    height: 21px;
    line-height: 21px;
    text-align: center;
    white-space: nowrap;
  }
  .period.cur {
    background: #f7f6ef;
    box-shadow: inset 0 0 0 1px #fff;
  }
  .qqbar {
    position: absolute;
    left: 0;
    top: 714px;
    height: 24px;
    display: flex;
  }
</style>
